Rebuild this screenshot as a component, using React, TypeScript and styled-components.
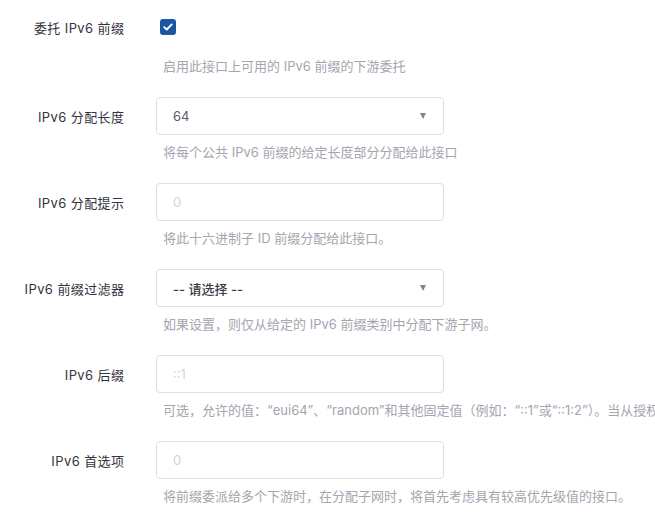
import React from "react";
import styled, { createGlobalStyle } from "styled-components";

const Global = createGlobalStyle`
  html, body {
    margin: 0;
    padding: 0;
    background: #ffffff;
    overflow: hidden;
  }
  body {
    font-family: "Inter", "Noto Sans CJK SC", sans-serif;
    font-size: 13px;
    color: #333;
  }
`;

const Form = styled.div`
  display: flex;
  flex-direction: column;
  gap: 21px;
  padding-top: 8px;
`;

const Row = styled.div`
  display: grid;
  grid-template-columns: 124px 1fr;
  column-gap: 32px;
  align-items: start;
`;

const Label = styled.label`
  height: 38px;
  display: flex;
  align-items: center;
  justify-content: flex-end;
  color: #33333f;
  white-space: nowrap;
  font-size: 13px;
  letter-spacing: 0.4px;
  margin-right: -0.4px;
`;

const Field = styled.div`
  display: flex;
  flex-direction: column;
  min-width: 0;
`;

const ControlLine = styled.div`
  height: 38px;
  display: flex;
  align-items: center;
`;

const Box = styled.div<{ $placeholder?: boolean; $strong?: boolean }>`
  box-sizing: border-box;
  width: 288px;
  height: 38px;
  border: 1px solid #dedfe3;
  border-radius: 4px;
  background: #fff;
  display: flex;
  align-items: center;
  justify-content: space-between;
  padding: 0 17px 0 16px;
  color: ${(p) => (p.$placeholder ? "#d2d4da" : p.$strong ? "#3a3a44" : "#5a5a64")};
  font-weight: ${(p) => (p.$strong ? 500 : 400)};
  font-size: 13px;
`;

const Arrow = styled.span`
  width: 0;
  height: 0;
  border-left: 3.5px solid transparent;
  border-right: 3.5px solid transparent;
  border-top: 6px solid #7b8597;
`;

const Check = styled.span`
  width: 16px;
  height: 16px;
  margin-left: 4px;
  border-radius: 3px;
  background: #1b56a3;
  display: flex;
  align-items: center;
  justify-content: center;
`;

const Desc = styled.div<{ $top?: number }>`
  margin-top: ${(p) => p.$top ?? 7}px;
  line-height: 20px;
  color: #a4a5af;
  font-size: 13px;
  white-space: nowrap;
  padding-left: 7px;
`;

type Item =
  | { kind: "check"; label: string; desc: string }
  | { kind: "select"; label: string; value: string; strong?: boolean; desc: string }
  | { kind: "input"; label: string; placeholder: string; desc: string };

const items: Item[] = [
  { kind: "check", label: "委托 IPv6 前缀", desc: "启用此接口上可用的 IPv6 前缀的下游委托" },
  { kind: "select", label: "IPv6 分配长度", value: "64", desc: "将每个公共 IPv6 前缀的给定长度部分分配给此接口" },
  { kind: "input", label: "IPv6 分配提示", placeholder: "0", desc: "将此十六进制子 ID 前缀分配给此接口。" },
  {
    kind: "select",
    label: "IPv6 前缀过滤器",
    value: "-- 请选择 --",
    strong: true,
    desc: "如果设置，则仅从给定的 IPv6 前缀类别中分配下游子网。",
  },
  {
    kind: "input",
    label: "IPv6 后缀",
    placeholder: "::1",
    desc: "可选，允许的值：“eui64”、“random”和其他固定值（例如：“::1”或“::1:2”）。当从授权服务器获得 IPv6 前缀时，使用后缀组成接口地址。",
  },
  {
    kind: "input",
    label: "IPv6 首选项",
    placeholder: "0",
    desc: "将前缀委派给多个下游时，在分配子网时，将首先考虑具有较高优先级值的接口。",
  },
];

export default function App() {
  return (
    <>
      <Global />
      <Form>
        {items.map((it) => (
          <Row key={it.label}>
            <Label>{it.label}</Label>
            <Field>
              {it.kind === "check" ? (
                <ControlLine>
                  <Check>
                    <svg width="10" height="8" viewBox="0 0 10 8">
                      <path
                        d="M1.3 4.2 L3.8 6.5 L8.7 1.4"
                        fill="none"
                        stroke="#fff"
                        strokeWidth="1.9"
                        strokeLinecap="round"
                        strokeLinejoin="round"
                      />
                    </svg>
                  </Check>
                </ControlLine>
              ) : it.kind === "select" ? (
                <Box $strong={it.strong}>
                  <span>{it.value}</span>
                  <Arrow />
                </Box>
              ) : (
                <Box $placeholder>
                  <span>{it.placeholder}</span>
                </Box>
              )}
              <Desc $top={it.kind === "check" ? 10 : 7}>{it.desc}</Desc>
            </Field>
          </Row>
        ))}
      </Form>
    </>
  );
}
